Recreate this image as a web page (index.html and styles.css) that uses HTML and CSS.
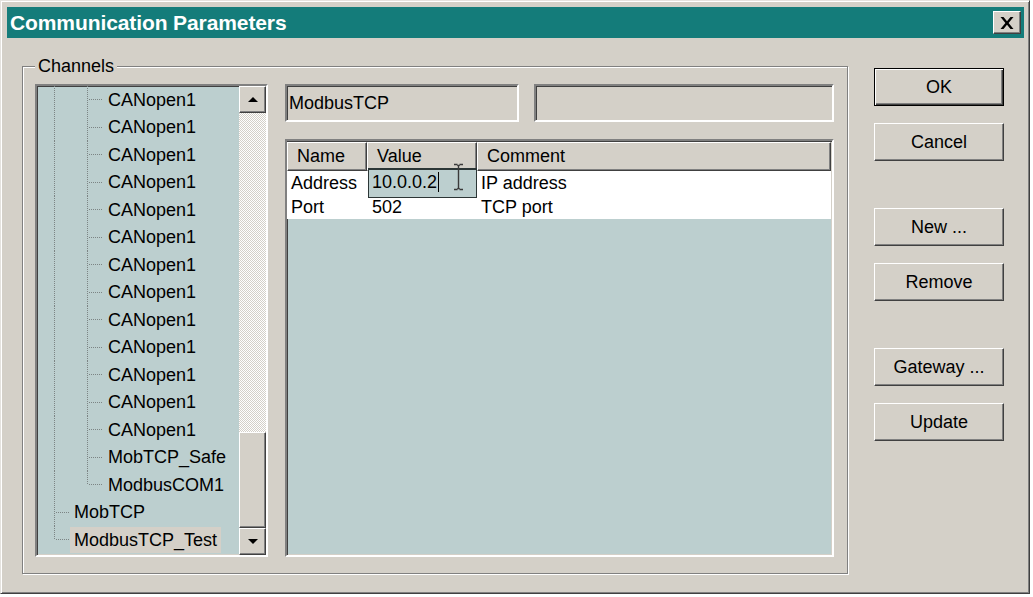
FILE: index.html
```html
<!DOCTYPE html>
<html lang="en">
<head>
    <meta charset="UTF-8">
    <title>Communication Parameters</title>
    <link rel="stylesheet" href="styles.css">
</head>
<body>

    <div class="window">
        <div class="titlebar">
            <span class="title">Communication Parameters</span>
            <button class="close" aria-label="Close">
                <svg width="14" height="12" viewBox="0 0 14 12">
                    <path d="M0.5 0h3l3.5 4.2L10.5 0h3L8.6 6l4.9 6h-3L7 7.8 3.5 12h-3l4.9-6z" fill="#000"/>
                </svg>
            </button>
        </div>

        <div class="content">
            <fieldset class="group">
                <legend>Channels</legend>
                <div class="group-inner">

                    <div class="tree sunken">
                        <div class="tree-items">
                            <div class="node"><span class="g0"></span><span class="gv w33"></span><span class="gvs w17"></span><span class="label">CANopen1</span></div>
                            <div class="node"><span class="g0"></span><span class="gv w33"></span><span class="gvs w17"></span><span class="label">CANopen1</span></div>
                            <div class="node"><span class="g0"></span><span class="gv w33"></span><span class="gvs w17"></span><span class="label">CANopen1</span></div>
                            <div class="node"><span class="g0"></span><span class="gv w33"></span><span class="gvs w17"></span><span class="label">CANopen1</span></div>
                            <div class="node"><span class="g0"></span><span class="gv w33"></span><span class="gvs w17"></span><span class="label">CANopen1</span></div>
                            <div class="node"><span class="g0"></span><span class="gv w33"></span><span class="gvs w17"></span><span class="label">CANopen1</span></div>
                            <div class="node"><span class="g0"></span><span class="gv w33"></span><span class="gvs w17"></span><span class="label">CANopen1</span></div>
                            <div class="node"><span class="g0"></span><span class="gv w33"></span><span class="gvs w17"></span><span class="label">CANopen1</span></div>
                            <div class="node"><span class="g0"></span><span class="gv w33"></span><span class="gvs w17"></span><span class="label">CANopen1</span></div>
                            <div class="node"><span class="g0"></span><span class="gv w33"></span><span class="gvs w17"></span><span class="label">CANopen1</span></div>
                            <div class="node"><span class="g0"></span><span class="gv w33"></span><span class="gvs w17"></span><span class="label">CANopen1</span></div>
                            <div class="node"><span class="g0"></span><span class="gv w33"></span><span class="gvs w17"></span><span class="label">CANopen1</span></div>
                            <div class="node"><span class="g0"></span><span class="gv w33"></span><span class="gvs w17"></span><span class="label">CANopen1</span></div>
                            <div class="node"><span class="g0"></span><span class="gv w33"></span><span class="gvs w17"></span><span class="label">MobTCP_Safe</span></div>
                            <div class="node"><span class="g0"></span><span class="gv w33"></span><span class="gend w17"></span><span class="label">ModbusCOM1</span></div>
                            <div class="node"><span class="g0"></span><span class="gvs w16"></span><span class="label">MobTCP</span></div>
                            <div class="node"><span class="g0"></span><span class="gend w16"></span><span class="label selected">ModbusTCP_Test</span></div>
                        </div>
                        <div class="scrollbar">
                            <div class="sb-btn raised"><span class="arrow-up"></span></div>
                            <div class="sb-track">
                                <div class="sb-thumb raised"></div>
                            </div>
                            <div class="sb-btn raised"><span class="arrow-down"></span></div>
                        </div>
                    </div>

                    <div class="panel">
                        <div class="fields">
                            <div class="field name-field sunken">ModbusTCP</div>
                            <div class="field sunken"></div>
                        </div>

                        <div class="params sunken">
                            <div class="thead">
                                <div class="th raised">Name</div>
                                <div class="th raised">Value</div>
                                <div class="th raised">Comment</div>
                            </div>
                            <div class="trow">
                                <div class="td">Address</div>
                                <div class="td value-cell">
                                    <div class="editor">10.0.0.2<span class="caret"></span>
                                        <svg class="ibeam" width="11" height="28" viewBox="0 0 11 28">
                                            <path d="M1 1.5h3.5M6.5 1.5H10M5.5 2v24M1 26.5h3.5M6.5 26.5H10M4.5 2l1 1 1-1M4.5 26l1-1 1 1" stroke="#3a3a3a" stroke-width="1.4" fill="none"/>
                                        </svg>
                                    </div>
                                </div>
                                <div class="td">IP address</div>
                            </div>
                            <div class="trow">
                                <div class="td">Port</div>
                                <div class="td val">502</div>
                                <div class="td">TCP port</div>
                            </div>
                        </div>
                    </div>

                </div>
            </fieldset>

            <div class="actions">
                <button class="btn default">OK</button>
                <button class="btn">Cancel</button>
                <button class="btn sep">New ...</button>
                <button class="btn">Remove</button>
                <button class="btn sep">Gateway ...</button>
                <button class="btn">Update</button>
            </div>
        </div>
    </div>

</body>
</html>
```

FILE: styles.css
```css
* {
    box-sizing: border-box;
}

body {
    margin: 0;
    background-color: #fff;
    font-family: 'Liberation Sans', Arial, sans-serif;
    font-size: 18px;
    color: #000;
}

.window {
    width: 1030px;
    height: 594px;
    background-color: #d4d0c8;
    border: 1px solid;
    border-color: #e4e2de #404040 #404040 #e4e2de;
    box-shadow: inset 1px 1px 0 #fff, inset -1px -1px 0 #808080;
    padding: 6px 5px 4px 6px;
}

/* 3d borders */
.raised {
    background-color: #d4d0c8;
    border: 1px solid;
    border-color: #fff #404040 #404040 #fff;
    box-shadow: inset -1px -1px 0 #808080;
}

.sunken {
    border: 2px solid;
    border-color: #808080 #fff #fff #808080;
    box-shadow: inset 1px 1px 0 #404040, inset -1px -1px 0 #d4d0c8;
}

.titlebar {
    height: 31px;
    background-color: #147c7a;
    display: flex;
    align-items: center;
    justify-content: space-between;
    padding: 0 3px;
}

.title {
    color: #fff;
    font-weight: bold;
    font-size: 21px;
    letter-spacing: -0.1px;
}

.close {
    width: 28px;
    height: 23px;
    padding: 0;
    display: flex;
    align-items: center;
    justify-content: center;
    background-color: #d4d0c8;
    border: 1px solid;
    border-color: #fff #404040 #404040 #fff;
    box-shadow: inset -1px -1px 0 #808080;
}

.content {
    display: flex;
    padding: 18px 0 0 15px;
}

.group {
    width: 826px;
    height: 518px;
    margin: 0;
    padding: 8px 13px 0 12px;
    border: 1px solid #808080;
    box-shadow: inset 1px 1px 0 #fff, 1px 1px 0 #fff;
}

.group legend {
    margin-left: 0;
    padding: 0 3px;
    line-height: 20px;
    background-color: #d4d0c8;
}

.group-inner {
    display: flex;
    gap: 17px;
    height: 473px;
}

/* channel tree */
.tree {
    width: 233px;
    display: flex;
    background-color: #bccfcf;
}

.tree-items {
    flex: 1;
    overflow: hidden;
}

.node {
    display: flex;
    align-items: stretch;
    height: 27.5px;
}

.g0 {
    width: 17px;
}

.w33 { width: 33px; }
.w17 { width: 17px; }
.w16 { width: 16px; }

.gv {
    background: repeating-linear-gradient(to bottom, #7c8484 0 1px, transparent 1px 2px) left top / 1px 100% no-repeat;
}

.gvs {
    background:
        repeating-linear-gradient(to bottom, #7c8484 0 1px, transparent 1px 2px) left top / 1px 100% no-repeat,
        repeating-linear-gradient(to right, #7c8484 0 1px, transparent 1px 2px) 2px 50% / 13px 1px no-repeat;
}

.gend {
    background:
        repeating-linear-gradient(to bottom, #7c8484 0 1px, transparent 1px 2px) left top / 1px 50% no-repeat,
        repeating-linear-gradient(to right, #7c8484 0 1px, transparent 1px 2px) 2px 50% / 13px 1px no-repeat;
}

.label {
    padding: 0 4px;
    line-height: 26px;
    align-self: center;
    white-space: nowrap;
}

.label.selected {
    background-color: #d4d0c8;
}

.scrollbar {
    width: 27px;
    display: flex;
    flex-direction: column;
}

.sb-btn {
    height: 27px;
    display: flex;
    align-items: center;
    justify-content: center;
}

.arrow-up {
    border-left: 5px solid transparent;
    border-right: 5px solid transparent;
    border-bottom: 5px solid #000;
}

.arrow-down {
    border-left: 5px solid transparent;
    border-right: 5px solid transparent;
    border-top: 5px solid #000;
}

.sb-track {
    flex: 1;
    display: flex;
    flex-direction: column;
    justify-content: flex-end;
    background: repeating-conic-gradient(#fff 0 25%, #d4d0c8 0 50%) 0 0 / 2px 2px;
}

.sb-thumb {
    height: 96px;
}

/* right side */
.panel {
    width: 549px;
    display: flex;
    flex-direction: column;
    gap: 17px;
}

.fields {
    display: flex;
    gap: 15px;
    height: 38px;
}

.field {
    flex: 1;
    background-color: #d4d0c8;
    padding-left: 2px;
    line-height: 34px;
}

.name-field {
    flex: 0 0 234px;
}

.params {
    flex: 1;
    background-color: #bccfcf;
    padding: 1px 1px 0 0;
}

.thead,
.trow {
    display: grid;
    grid-template-columns: 80px 110px 1fr;
}

.thead {
    height: 29px;
}

.th {
    padding-left: 9px;
    line-height: 26px;
}

.trow {
    height: 24px;
    background-color: #fff;
}

.td {
    padding-left: 4px;
    line-height: 24px;
    white-space: nowrap;
}

.val {
    padding-left: 5px;
}

.value-cell {
    position: relative;
}

.editor {
    position: absolute;
    left: 1px;
    right: 0;
    top: -3px;
    bottom: -3px;
    border: 1px solid #2c3636;
    box-shadow: inset 0 1px 0 #2c3636;
    background-color: #bccfcf;
    padding-left: 3px;
    line-height: 27px;
}

.caret {
    display: inline-block;
    width: 1px;
    height: 20px;
    margin-left: 1px;
    vertical-align: -4px;
    background-color: #000;
}

.ibeam {
    position: absolute;
    left: 84px;
    top: -6px;
}

/* buttons */
.actions {
    display: flex;
    flex-direction: column;
    gap: 17px;
    margin-left: 26px;
    padding-top: 12px;
}

.btn {
    width: 130px;
    height: 38px;
    padding: 0;
    font-family: 'Liberation Sans', Arial, sans-serif;
    font-size: 18px;
    color: #000;
    background-color: #d4d0c8;
    border: 1px solid;
    border-color: #fff #404040 #404040 #fff;
    box-shadow: inset -1px -1px 0 #808080;
}

.btn.default {
    border-color: #000;
    box-shadow: inset 1px 1px 0 #fff, inset -1px -1px 0 #404040, inset -2px -2px 0 #808080;
}

.btn.sep {
    margin-top: 30px;
}
```
